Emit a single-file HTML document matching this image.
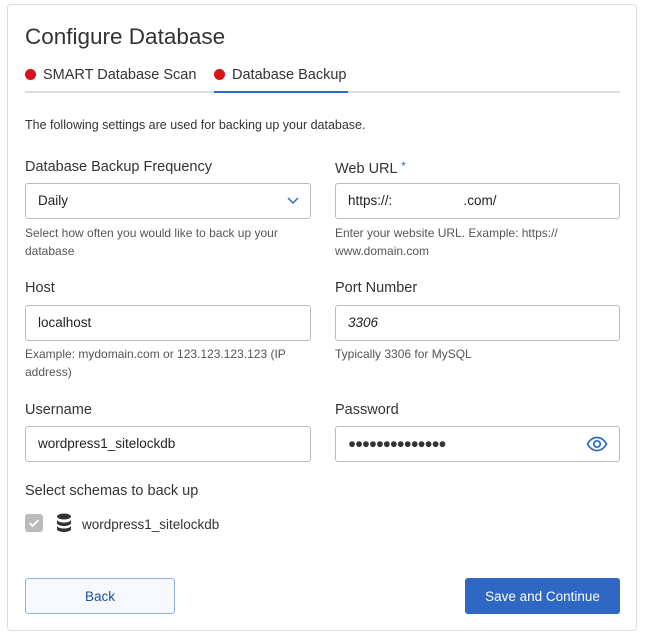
<!DOCTYPE html>
<html><head><style>
*{box-sizing:border-box;margin:0;padding:0}
body{width:647px;height:637px;background:#fff;font-family:"Liberation Sans",sans-serif;color:#333;position:relative;overflow:hidden}
.card{position:absolute;left:7px;top:4px;width:630px;height:627px;border:1px solid #ddd;border-radius:4px}
.a{position:absolute;white-space:nowrap}
.lbl{font-size:14.5px;color:#333}
.help{font-size:12px;color:#555;line-height:18px}
.inp{position:absolute;height:36px;border:1px solid #bbb;border-radius:3px;font-size:13.5px;padding:0 12px;line-height:34px;color:#222}
.dot{display:inline-block;width:11px;height:11px;border-radius:50%;background:#d9121a;margin-right:7px;vertical-align:-1px}
</style></head><body>
<div class="card"></div>
<div class="a" style="left:25px;top:24px;font-size:22.5px;color:#333">Configure Database</div>
<div class="a" style="left:25px;top:67px;font-size:14.5px"><span class="dot"></span>SMART Database Scan</div>
<div class="a" style="left:214px;top:67px;font-size:14.5px"><span class="dot"></span>Database Backup</div>
<div class="a" style="left:25px;top:91px;width:595px;height:2px;background:#ddd"></div>
<div class="a" style="left:214px;top:91px;width:134px;height:2px;background:#2e6bc6"></div>
<div class="a" style="left:25px;top:118px;font-size:12.5px;color:#333">The following settings are used for backing up your database.</div>

<div class="a lbl" style="left:25px;top:159px">Database Backup Frequency</div>
<div class="inp" style="left:25px;top:183px;width:286px">Daily
<svg style="position:absolute;right:11px;top:13px" width="12" height="8" viewBox="0 0 12 8"><path d="M1 1l5 5 5-5" stroke="#2e6bc6" stroke-width="1.5" fill="none"/></svg></div>
<div class="a help" style="left:25px;top:224px">Select how often you would like to back up your<br>database</div>

<div class="a lbl" style="left:335px;top:159px">Web URL <span style="color:#2e6bc6;font-size:12px;vertical-align:3px">*</span></div>
<div class="inp" style="left:335px;top:183px;width:285px">https://:&nbsp;&nbsp;&nbsp;&nbsp;&nbsp;&nbsp;&nbsp;&nbsp;&nbsp;&nbsp;&nbsp;&nbsp;&nbsp;&nbsp;&nbsp;&nbsp;&nbsp;&nbsp;&nbsp;.com/</div>
<div class="a help" style="left:335px;top:224px">Enter your website URL. Example: https://<br>www.domain.com</div>

<div class="a lbl" style="left:25px;top:280px">Host</div>
<div class="inp" style="left:25px;top:305px;width:286px">localhost</div>
<div class="a help" style="left:25px;top:345px">Example: mydomain.com or 123.123.123.123 (IP<br>address)</div>

<div class="a lbl" style="left:335px;top:280px">Port Number</div>
<div class="inp" style="left:335px;top:305px;width:285px;font-style:italic">3306</div>
<div class="a help" style="left:335px;top:345px">Typically 3306 for MySQL</div>

<div class="a lbl" style="left:25px;top:402px">Username</div>
<div class="inp" style="left:25px;top:426px;width:286px">wordpress1_sitelockdb</div>
<div class="a lbl" style="left:335px;top:402px">Password</div>
<div class="inp" style="left:335px;top:426px;width:285px;font-size:13.5px;letter-spacing:-1.2px;color:#333">●●●●●●●●●●●●●●
<svg style="position:absolute;right:11px;top:9px" width="22" height="16" viewBox="0 0 22 16"><path d="M1.5 8C4 3.5 7.5 1.5 11 1.5S18 3.5 20.5 8C18 12.5 14.5 14.5 11 14.5S4 12.5 1.5 8z" stroke="#2e6bc6" stroke-width="1.7" fill="none"/><circle cx="11" cy="8" r="3.2" stroke="#2e6bc6" stroke-width="1.7" fill="none"/></svg></div>

<div class="a lbl" style="left:25px;top:483px">Select schemas to back up</div>
<div class="a" style="left:25px;top:514px;width:18px;height:18px;background:#bbb;border-radius:3px"><svg width="18" height="18" viewBox="0 0 18 18"><path d="M4.5 9l3 3 6-6" stroke="#fff" stroke-width="1.8" fill="none"/></svg></div>
<svg class="a" style="left:56px;top:513px" width="16" height="20" viewBox="0 0 16 20"><ellipse cx="8" cy="3.5" rx="7" ry="3" fill="#333"/><path d="M1 6.5c0 1.7 3 3 7 3s7-1.3 7-3v3.5c0 1.7-3 3-7 3s-7-1.3-7-3z" fill="#333"/><path d="M1 12.5c0 1.7 3 3 7 3s7-1.3 7-3v3.5c0 1.7-3 3-7 3s-7-1.3-7-3z" fill="#333"/></svg>
<div class="a" style="left:82px;top:517px;font-size:13.5px;color:#333">wordpress1_sitelockdb</div>

<div class="a" style="left:25px;top:578px;width:150px;height:36px;border:1px solid #8fb0e0;border-radius:3px;background:#f5f8fd;text-align:center;line-height:36px;font-size:13.5px;color:#1f4f9a">Back</div>
<div class="a" style="left:465px;top:578px;width:155px;height:36px;border-radius:3px;background:#2e67c4;text-align:center;line-height:37px;font-size:13.5px;color:#fff">Save and Continue</div>
</body></html>
